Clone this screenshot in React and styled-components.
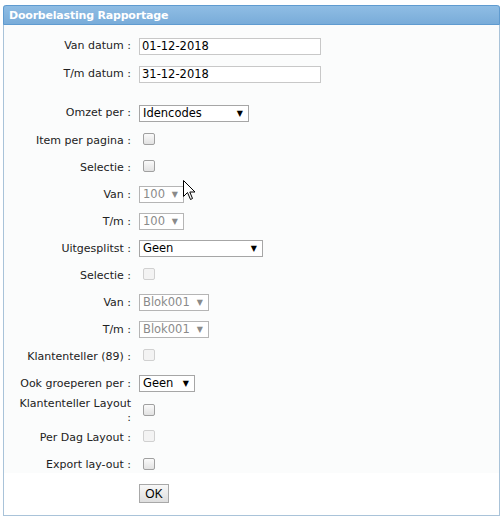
import React from "react";
import styled, { createGlobalStyle } from "styled-components";

const Global = createGlobalStyle`
  body {
    margin: 0;
    background: #fff;
    font-family: "DejaVu Sans", Verdana, sans-serif;
    font-size: 11px;
    color: #222;
  }
`;

const Panel = styled.div`
  position: relative;
  margin: 5px 0 0 3px;
  width: 497px;
  height: 511px;
  box-sizing: border-box;
  border: 1px solid #a9c3d9;
  border-top: none;
  border-radius: 3px 3px 0 0;
  display: flex;
  flex-direction: column;
`;

const Header = styled.div`
  height: 20px;
  box-sizing: border-box;
  margin: 0 -1px;
  padding: 3px 0 0 5px;
  background: linear-gradient(#8fbde4, #79acd9);
  border: 1px solid #5f9bd0;
  border-radius: 3px 3px 0 0;
  color: #fff;
  font-weight: bold;
  font-size: 11px;
  letter-spacing: -0.2px;
`;

const Form = styled.div`
  background: #fbfcfc;
  padding: 7px 0 0;
  height: 448px;
  box-sizing: border-box;
`;

const Row = styled.div`
  display: grid;
  grid-template-columns: 127px 1fr;
  column-gap: 8px;
  align-items: center;
  height: ${(p) => p.$h || 27}px;
`;

const Spacer = styled.div`
  height: 11px;
`;

const Label = styled.label`
  text-align: right;
  line-height: 14px;
  white-space: nowrap;
`;

const TextInput = styled.input`
  width: 182px;
  height: 17px;
  box-sizing: border-box;
  border: 1px solid #c8c8c8;
  padding: 0 2px;
  font: inherit;
  font-size: 11.5px;
  color: #000;
  background: #fff;
  outline: none;
`;

const SelectBox = styled.div`
  position: relative;
  width: ${(p) => p.$w}px;
  height: 17px;
  box-sizing: border-box;
  border: 1px solid ${(p) => (p.$disabled ? "#b5b5b5" : "#a6a6a6")};
  background: #fff;
  color: ${(p) => (p.$disabled ? "#8a8a8a" : "#000")};
  font-size: 11.5px;
  line-height: 15px;
  padding-left: 3px;
  &::after {
    content: "▼";
    position: absolute;
    right: 5px;
    top: 0;
    font-size: 8px;
    color: ${(p) => (p.$disabled ? "#8a8a8a" : "#000")};
  }
`;

const Check = styled.input.attrs({ type: "checkbox" })`
  appearance: none;
  margin: 0 0 0 4px;
  width: 12px;
  height: 12px;
  border: 1px solid ${(p) => (p.disabled ? "#d0d0d0" : "#a0a0a0")};
  border-radius: 2px;
  background: ${(p) =>
    p.disabled ? "#f3f3f3" : "linear-gradient(#fafafa, #e2e2e2)"};
`;

const Footer = styled.div`
  padding: 11px 0 0 135px;
`;

const Button = styled.button`
  height: 19px;
  width: 30px;
  padding: 0;
  border: 1px solid #a8a8a8;
  background: linear-gradient(#f8f8f8, #dedede);
  font-family: "Liberation Sans", Arial, sans-serif;
  font-size: 12px;
  color: #000;
`;

const Cursor = styled.svg`
  position: absolute;
  left: 179px;
  top: 175px;
`;

function Select({ w, value, disabled }) {
  return (
    <SelectBox $w={w} $disabled={disabled}>
      {value}
    </SelectBox>
  );
}

export default function App() {
  return (
    <>
      <Global />
      <Panel>
        <Header>Doorbelasting Rapportage</Header>
        <Form>
          <Row $h={28}>
            <Label>Van datum :</Label>
            <TextInput defaultValue="01-12-2018" />
          </Row>
          <Row $h={28}>
            <Label>T/m datum :</Label>
            <TextInput defaultValue="31-12-2018" />
          </Row>
          <Spacer />
          <Row $h={28}>
            <Label>Omzet per :</Label>
            <Select w={110} value="Idencodes" />
          </Row>
          <Row>
            <Label>Item per pagina :</Label>
            <div><Check /></div>
          </Row>
          <Row>
            <Label>Selectie :</Label>
            <div><Check /></div>
          </Row>
          <Row>
            <Label>Van :</Label>
            <Select w={45} value="100" disabled />
          </Row>
          <Row>
            <Label>T/m :</Label>
            <Select w={45} value="100" disabled />
          </Row>
          <Row>
            <Label>Uitgesplitst :</Label>
            <Select w={124} value="Geen" />
          </Row>
          <Row>
            <Label>Selectie :</Label>
            <div><Check disabled /></div>
          </Row>
          <Row>
            <Label>Van :</Label>
            <Select w={70} value="Blok001" disabled />
          </Row>
          <Row>
            <Label>T/m :</Label>
            <Select w={70} value="Blok001" disabled />
          </Row>
          <Row>
            <Label>Klantenteller (89) :</Label>
            <div><Check disabled /></div>
          </Row>
          <Row>
            <Label>Ook groeperen per :</Label>
            <Select w={56} value="Geen" />
          </Row>
          <Row>
            <Label>
              Klantenteller Layout
              <br />:
            </Label>
            <div><Check /></div>
          </Row>
          <Row>
            <Label>Per Dag Layout :</Label>
            <div><Check disabled /></div>
          </Row>
          <Row $h={28}>
            <Label>Export lay-out :</Label>
            <div><Check /></div>
          </Row>
        </Form>
        <Footer>
          <Button>OK</Button>
        </Footer>
        <Cursor width="13" height="21" viewBox="0 0 13 21">
          <path
            d="M0.5 0.5 L0.5 16.5 L4.5 12.5 L7.5 19.5 L9.5 18.5 L6.8 12 L12 12 Z"
            fill="#fff"
            stroke="#000"
            strokeWidth="1"
          />
        </Cursor>
      </Panel>
    </>
  );
}
